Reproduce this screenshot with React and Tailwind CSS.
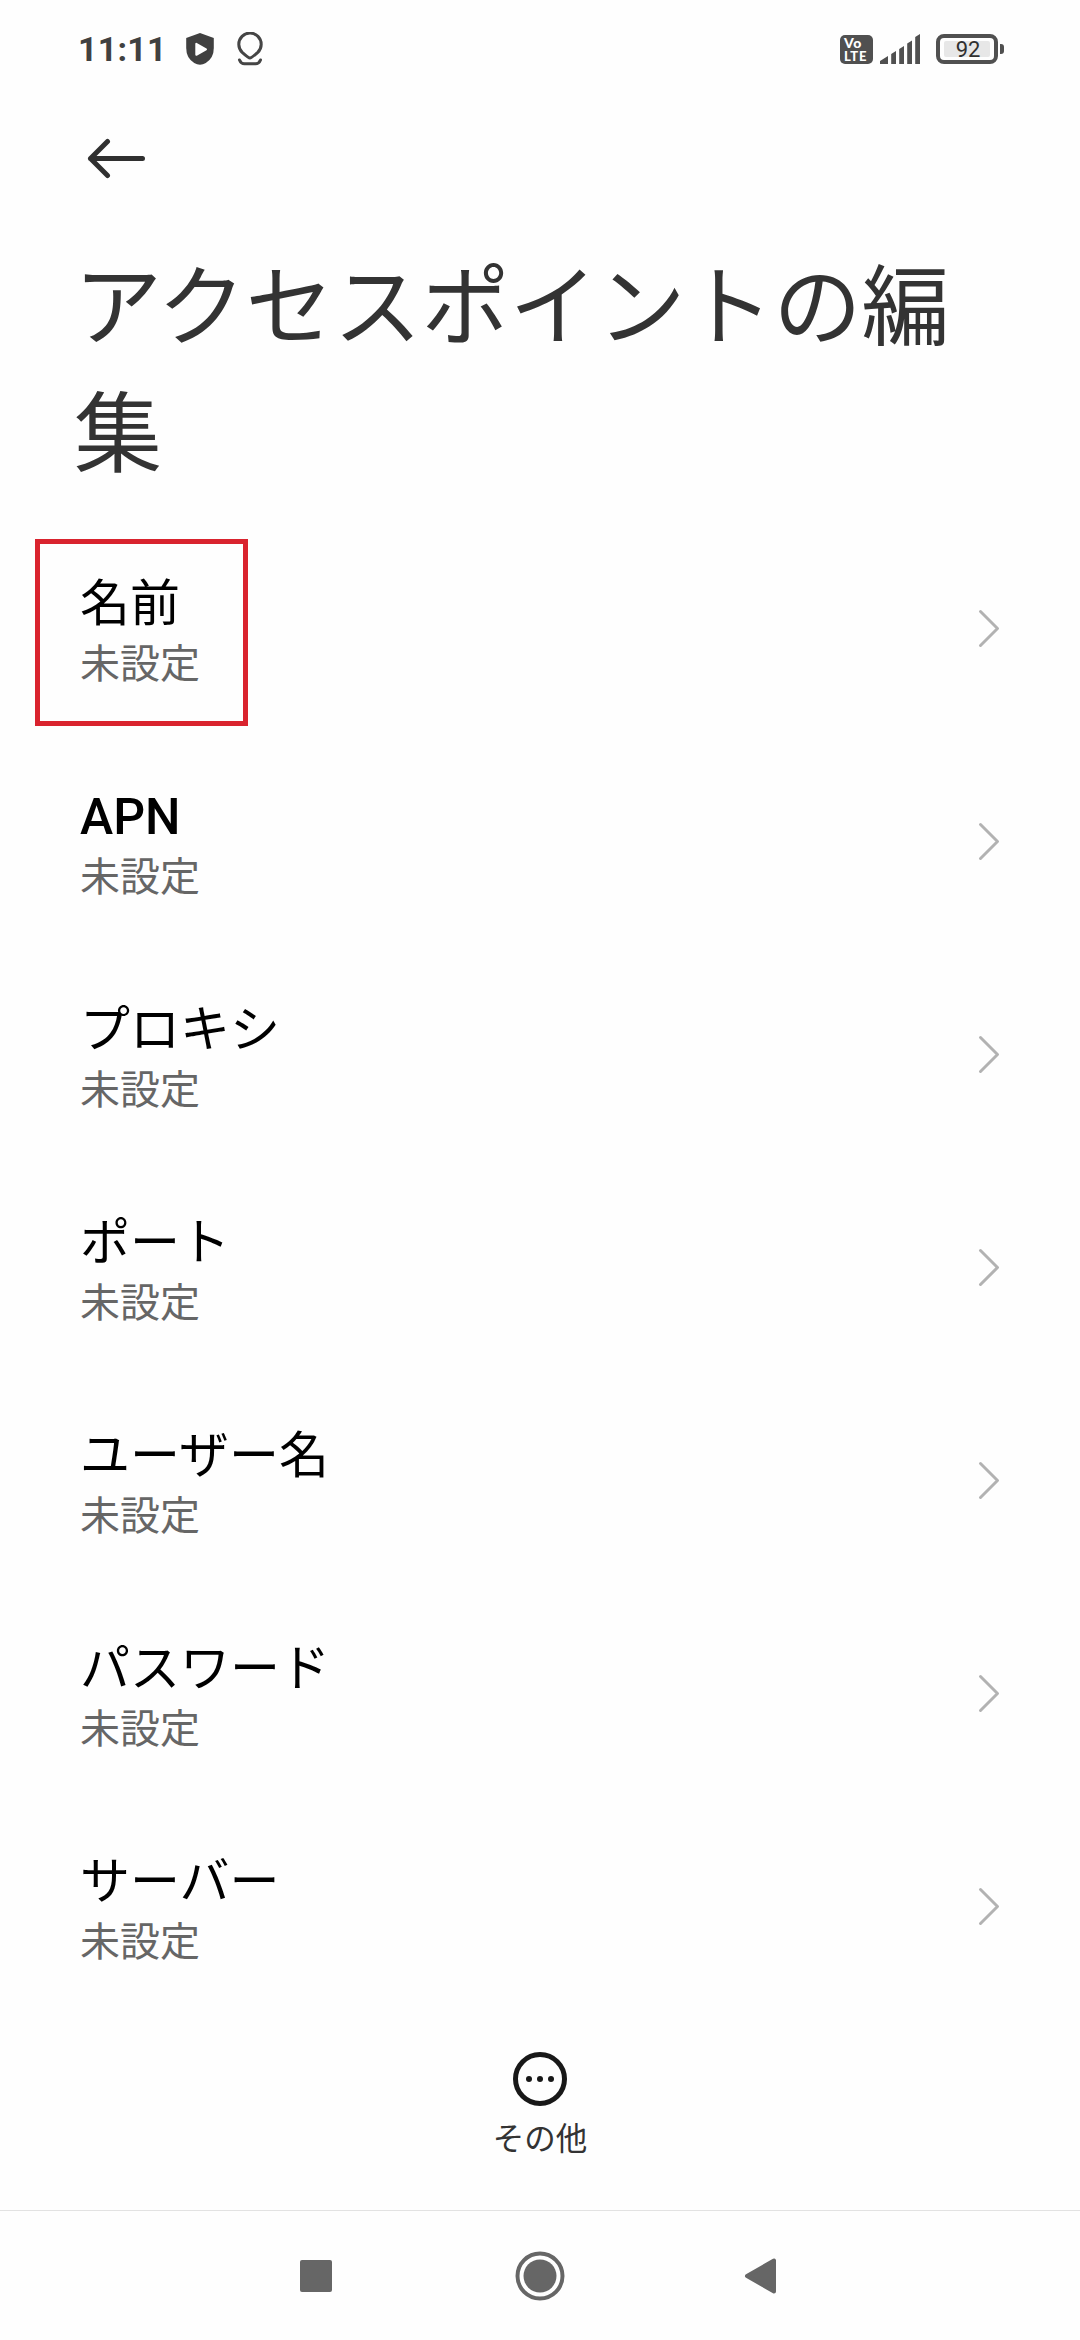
const rows = ["名前", "APN", "プロキシ", "ポート", "ユーザー名", "パスワード", "サーバー"];

function StatusBar() {
  return (
    <header className="flex h-[98px] items-center justify-between pl-[78px] pr-[76px]">
      <div className="flex items-center">
        <span className="w-[107px] whitespace-nowrap font-['Roboto'] text-[34px] font-bold leading-[40px] tracking-[0.2px] text-[#404040]">
          11:11
        </span>
        <svg className="h-[34px] w-[30px]" viewBox="0 0 30 34">
          <path d="M15 1L28.8 6V16Q28.8 26 20.8 31Q15 34.6 9.2 31Q1.2 26 1.2 16V6Z" fill="#404040" />
          <path d="M11.3 11.8V22.8L21 17.3Z" fill="#fff" stroke="#fff" strokeWidth="2" strokeLinejoin="round" />
        </svg>
        <svg className="ml-[20px] h-[34px] w-[30px]" viewBox="0 0 30 34" fill="none" stroke="#454545" strokeWidth="3" strokeLinecap="round">
          <path d="M15 26Q13.5 26 7.2 20.3A11.2 11.2 0 1 1 22.8 20.3Q16.5 26 15 26Z" />
          <path d="M4.5 28Q6 31.8 9.5 31.8H20.5Q24 31.8 25.5 28" />
        </svg>
      </div>
      <div className="flex items-center">
        <div className="flex h-[29px] w-[33px] flex-col justify-center rounded-[5px] bg-[#505050] pl-[4px] font-['Lato'] font-black text-white">
          <span className="h-[12px] text-[14px] leading-[12px] tracking-[0.5px]">Vo</span>
          <span className="h-[13px] whitespace-nowrap text-[13px] leading-[14px] tracking-[0.7px]">LTE</span>
        </div>
        <svg className="ml-[7px] h-[30px] w-[40px]" viewBox="0 0 40 30" fill="#505050">
          <path d="M0 30V27L8 22V30ZM11.2 30V20L16 17V30ZM19.2 30V15L24 12V30ZM27.2 30V9.5L32 6.5V30ZM35.2 30V3L40 0V30Z" />
        </svg>
        <div className="ml-[16px] flex h-[30px] w-[62px] items-center justify-center rounded-[8px] border-4 border-[#505050]">
          <span className="flex h-[16px] w-[46px] items-center justify-center rounded-[2px] bg-[#e7e7e7] pl-[2px] pt-[2px] font-['Roboto'] text-[22px] leading-none text-[#303030]">
            92
          </span>
        </div>
        <span className="ml-[2px] h-[10px] w-[4px] rounded-r-[3px] bg-[#505050]" />
      </div>
    </header>
  );
}

function Row({ label, highlighted }) {
  return (
    <li className="relative flex h-[213px] items-center justify-between pl-[80px] pr-[79px]">
      {highlighted && (
        <span className="absolute left-[35px] top-[18px] h-[187px] w-[213px] border-[5px] border-[#d9232e]" />
      )}
      <div className="whitespace-nowrap pt-[10px]">
        <div className={label === "APN" ? "text-[50px] font-medium leading-[64px] text-black" : "text-[50px] leading-[64px] text-black"}>
          {label}
        </div>
        <div className="text-[40px] leading-[58px] text-[#666666]">未設定</div>
      </div>
      <svg className="h-[40px] w-[24px]" viewBox="0 0 24 40" fill="none" stroke="#b2b2b2" strokeWidth="3" strokeLinecap="round" strokeLinejoin="round">
        <path d="M3.5 3.5L20.5 20.5L3.5 37.5" />
      </svg>
    </li>
  );
}

export default function App() {
  return (
    <div className="flex h-[2340px] w-[1080px] flex-col overflow-hidden bg-[#fefefe] font-['Roboto','Noto_Sans_CJK_JP',sans-serif]">
      <StatusBar />
      <div className="flex h-[120px] items-center pl-[86px]">
        <svg className="h-[42px] w-[60px]" viewBox="0 0 60 42" fill="none" stroke="#303030" strokeWidth="5" strokeLinecap="round" strokeLinejoin="round">
          <path d="M56.5 21.5H4.5M21.5 4.5L4.5 21.5L21.5 38.5" />
        </svg>
      </div>
      <h1 className="mt-[26px] h-[277px] whitespace-nowrap pl-[74px] text-[88px] leading-[127px] text-[#333333]">
        アクセスポイントの編
        <br />集
      </h1>
      <ul>
        {rows.map((label, i) => (
          <Row key={label} label={label} highlighted={i === 0} />
        ))}
      </ul>
      <div className="mt-[40px] flex h-[158px] flex-col items-center">
        <svg className="h-[54px] w-[54px]" viewBox="0 0 54 54" fill="#181818">
          <circle cx="27" cy="27" r="24.5" fill="none" stroke="#181818" strokeWidth="5" />
          <circle cx="16" cy="27" r="3" />
          <circle cx="27" cy="27" r="3" />
          <circle cx="38" cy="27" r="3" />
        </svg>
        <span className="mt-[11px] text-[31.5px] leading-[46px] text-[#333333]">その他</span>
      </div>
      <nav className="flex h-[130px] items-center border-t border-[#e2e2e2] pl-[300px]">
        <span className="h-[32px] w-[32px] rounded-[2px] bg-[#666666]" />
        <svg className="ml-[183px] h-[50px] w-[50px]" viewBox="0 0 50 50" fill="#666666">
          <circle cx="25" cy="25" r="22.5" fill="none" stroke="#666666" strokeWidth="4" />
          <circle cx="25" cy="25" r="16.5" />
        </svg>
        <svg className="ml-[179px] h-[38px] w-[33px]" viewBox="0 0 33 38">
          <path d="M3 19L30 3.5V34.5Z" fill="#666666" stroke="#666666" strokeWidth="4" strokeLinejoin="round" />
        </svg>
      </nav>
    </div>
  );
}
